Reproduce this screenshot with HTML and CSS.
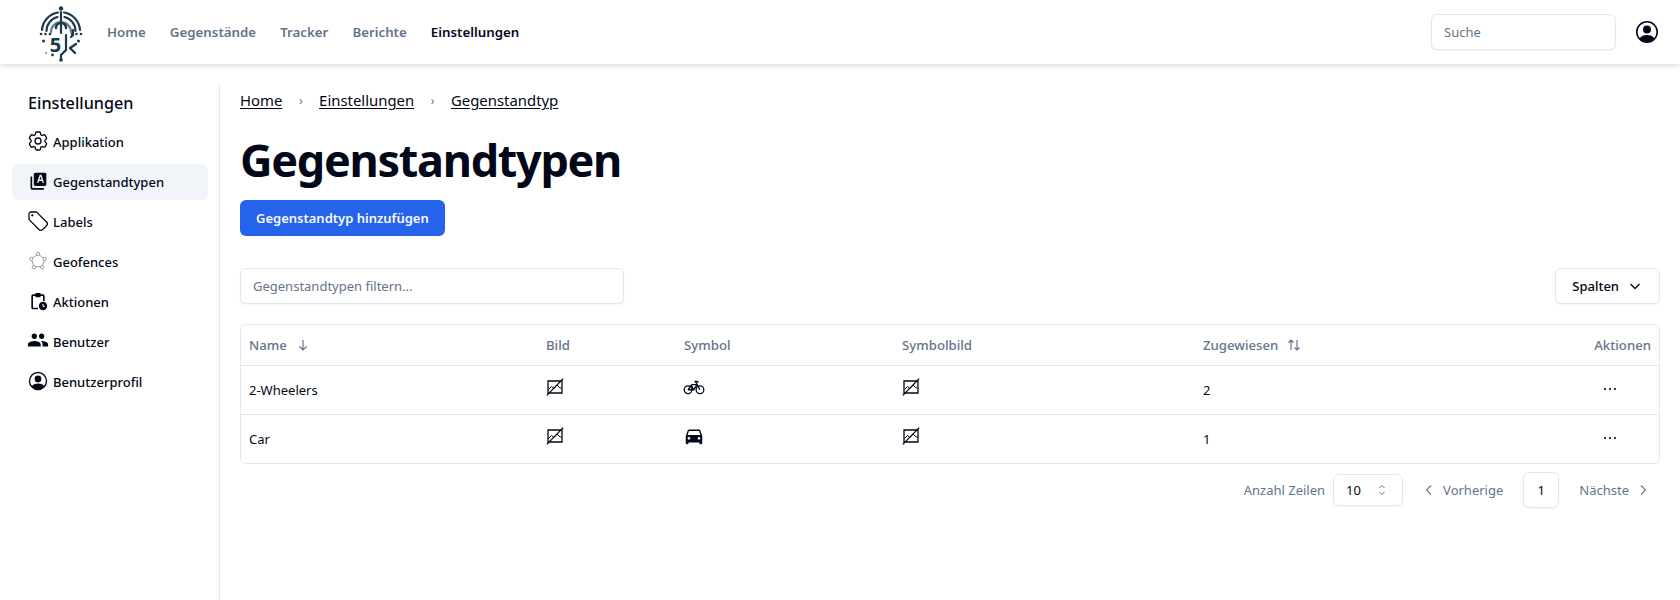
FILE: index.html
```html
<!DOCTYPE html>
<html lang="de">
	<head>
		<meta charset="UTF-8">
		<title>Gegenstandtypen</title>
		<link rel="stylesheet" href="styles.css">
	</head>

	<body>
		<svg class="sprite" width="0" height="0">
			<symbol id="no-image" viewBox="0 0 18 18">
				<path d="M2 3h14v12H2z" fill="none" stroke="currentColor" stroke-width="1.3"/>
				<path d="M2.500 11.500l3-3 2.500 2 3-3.500 2 2 2.500 1.500" fill="none" stroke="currentColor" stroke-width="1"/>
				<path d="M.8 17.400L17.200.6" fill="none" stroke="currentColor" stroke-width="1.3"/>
			</symbol>
			<symbol id="dots" viewBox="0 0 16 16">
				<circle cx="3" cy="8" r="1.100"/><circle cx="8" cy="8" r="1.100"/><circle cx="13" cy="8" r="1.100"/>
			</symbol>
		</svg>

		<header class="topbar">
			<div class="topbar-left">
				<svg class="logo" viewBox="0 0 44 56" fill="none" stroke="#1b3a4b" stroke-linecap="round">
					<circle cx="22" cy="2.500" r="2.200" fill="#1b3a4b" stroke="none"/>
					<path d="M3 24a19 19 0 0 1 16-17.500M25 6.500a19 19 0 0 1 16 17.500" stroke-width="2.200"/>
					<path d="M7.500 25a14.500 14.500 0 0 1 11-14M25.500 11a14.500 14.500 0 0 1 11 14" stroke-width="2.200"/>
					<path d="M12 26a10 10 0 0 1 20 0" stroke="#5b7a88" stroke-width="2.200"/>
					<path d="M22 6v21" stroke-width="2.200"/>
					<path d="M17 22a5 5 0 0 1 10 0" stroke-width="2.400"/>
					<path d="M34 24v5l-2 2M27 29v15l-5 5v5" stroke-width="2.200"/>
					<path d="M31 42l6-4M31 42l5 5" stroke-width="2.400"/>
					<circle cx="22" cy="54" r="1.800" fill="#1b3a4b" stroke="none"/>
					<g fill="#1b3a4b" stroke="none">
						<circle cx="2" cy="28" r="1.300"/><circle cx="6.500" cy="28" r="1.300"/><circle cx="11" cy="28" r="1.300"/>
						<circle cx="33" cy="28" r="1.300"/><circle cx="37.500" cy="28" r="1.300"/><circle cx="42" cy="28" r="1.300"/>
						<circle cx="4.500" cy="35" r="1.500"/><circle cx="39.500" cy="35" r="1.500"/>
						<circle cx="7" cy="47" r=".8"/><circle cx="13.500" cy="49" r="1.400"/>
						<text x="16.500" y="46" class="logo-digit" text-anchor="middle">5</text>
					</g>
				</svg>
				<nav class="mainnav">
					<a href="#">Home</a>
					<a href="#">Gegenstände</a>
					<a href="#">Tracker</a>
					<a href="#">Berichte</a>
					<a href="#" class="current">Einstellungen</a>
				</nav>
			</div>
			<div class="topbar-right">
				<input class="field search" type="text" placeholder="Suche">
				<svg class="user-icon" viewBox="0 0 24 24">
					<circle cx="12" cy="12" r="10.200" fill="none" stroke="currentColor" stroke-width="1.600"/>
					<circle cx="12" cy="9.500" r="4"/>
					<path d="M4.500 18.500c1.500-2.500 4-3.500 7.500-3.500s6 1 7.500 3.500c-2 2.300-4.500 3.500-7.500 3.500s-5.500-1.200-7.500-3.500z"/>
				</svg>
			</div>
		</header>

		<div class="layout">
			<aside class="sidebar">
				<h2>Einstellungen</h2>
				<ul>
					<li>
						<a href="#">
							<svg viewBox="2 2 20 20" fill="none" stroke="currentColor" stroke-width="1.300" stroke-linejoin="round">
								<path d="M9.594 3.940c.09-.542.56-.94 1.110-.94h2.593c.55 0 1.020.398 1.110.94l.213 1.281c.063.374.313.686.645.87.074.04.147.083.22.127.325.196.72.257 1.075.124l1.217-.456a1.125 1.125 0 0 1 1.370.49l1.296 2.247a1.125 1.125 0 0 1-.26 1.431l-1.003.827c-.293.241-.438.613-.43.992a7.723 7.723 0 0 1 0 .255c-.008.378.137.75.43.991l1.004.827c.424.35.534.955.26 1.430l-1.298 2.247a1.125 1.125 0 0 1-1.369.491l-1.217-.456c-.355-.133-.75-.072-1.076.124a6.470 6.470 0 0 1-.22.128c-.331.183-.581.495-.644.869l-.213 1.281c-.09.543-.56.94-1.110.94h-2.594c-.55 0-1.019-.398-1.110-.94l-.213-1.281c-.062-.374-.312-.686-.644-.87a6.520 6.520 0 0 1-.22-.127c-.325-.196-.72-.257-1.076-.124l-1.217.456a1.125 1.125 0 0 1-1.369-.49l-1.297-2.247a1.125 1.125 0 0 1 .26-1.431l1.004-.827c.292-.24.437-.613.43-.991a6.932 6.932 0 0 1 0-.255c.007-.38-.138-.751-.43-.992l-1.004-.827a1.125 1.125 0 0 1-.26-1.430l1.297-2.247a1.125 1.125 0 0 1 1.370-.491l1.216.456c.356.133.751.072 1.076-.124.072-.044.146-.086.22-.128.332-.183.582-.495.644-.869l.214-1.280Z"/>
								<circle cx="12" cy="12" r="3"/>
							</svg>
							Applikation
						</a>
					</li>
					<li class="active">
						<a href="#">
							<svg viewBox="0 0 24 24">
								<path d="M3 6.500h2v14h14v2H5a2 2 0 0 1-2-2z"/>
								<rect x="7" y="2" width="15" height="16" rx="2"/>
								<path d="M14 4.500l-3.300 9.500h1.800l.7-2.100h3.600l.7 2.100h1.800L16 4.500zM13.700 10.300l1.300-3.800 1.300 3.800z" fill="#f1f5f9" fill-rule="evenodd"/>
							</svg>
							Gegenstandtypen
						</a>
					</li>
					<li>
						<a href="#">
							<svg viewBox="2 2 20 20" fill="none" stroke="currentColor" stroke-width="1.300" stroke-linejoin="round">
								<path d="M9.568 3H5.250A2.250 2.250 0 0 0 3 5.250v4.318c0 .597.237 1.170.659 1.591l9.581 9.581c.699.699 1.780.872 2.607.33a18.095 18.095 0 0 0 5.223-5.223c.542-.827.369-1.908-.33-2.607L11.160 3.660A2.250 2.250 0 0 0 9.568 3Z"/>
								<circle cx="6.300" cy="6.300" r=".5" fill="currentColor"/>
							</svg>
							Labels
						</a>
					</li>
					<li>
						<a href="#">
							<svg viewBox="0 0 24 24" fill="none" stroke="#8b8b8b" stroke-width="1">
								<path d="M12 3.500l8 6-3 9.500H7l-3-9.500z"/>
								<g fill="#fff">
									<circle cx="12" cy="3.500" r="2"/><circle cx="20" cy="9.500" r="2"/><circle cx="17" cy="19.500" r="2"/>
									<circle cx="7" cy="19.500" r="2"/><circle cx="4" cy="9.500" r="2"/>
								</g>
							</svg>
							Geofences
						</a>
					</li>
					<li>
						<a href="#">
							<svg viewBox="0 0 24 24">
								<path d="M9 2.500h6v1.500h3a2 2 0 0 1 2 2v6h-2V6h-3v1.500H9V6H6v14h6v2H6a2 2 0 0 1-2-2V6a2 2 0 0 1 2-2h3z"/>
								<circle cx="18" cy="18" r="5"/>
								<path d="M18 15.500v3h2.200" fill="none" stroke="#fff" stroke-width="1.200"/>
							</svg>
							Aktionen
						</a>
					</li>
					<li>
						<a href="#">
							<svg viewBox="0 0 24 24" class="wide">
								<path d="M16 11c1.660 0 2.990-1.340 2.990-3S17.660 5 16 5c-1.660 0-3 1.340-3 3s1.340 3 3 3zm-8 0c1.660 0 2.990-1.340 2.990-3S9.660 5 8 5C6.340 5 5 6.340 5 8s1.340 3 3 3zm0 2c-2.330 0-7 1.170-7 3.500V19h14v-2.500c0-2.330-4.670-3.500-7-3.500zm8 0c-.29 0-.62.02-.97.05 1.160.84 1.970 1.970 1.970 3.450V19h6v-2.500c0-2.330-4.670-3.500-7-3.500z"/>
							</svg>
							Benutzer
						</a>
					</li>
					<li>
						<a href="#">
							<svg viewBox="0 0 24 24">
								<circle cx="12" cy="12" r="10.200" fill="none" stroke="currentColor" stroke-width="1.600"/>
								<circle cx="12" cy="9.500" r="4"/>
								<path d="M4.500 18.500c1.500-2.500 4-3.500 7.500-3.500s6 1 7.500 3.500c-2 2.300-4.500 3.500-7.500 3.500s-5.500-1.200-7.500-3.500z"/>
							</svg>
							Benutzerprofil
						</a>
					</li>
				</ul>
			</aside>

			<main class="content">
				<nav class="breadcrumb">
					<a href="#">Home</a>
					<span class="sep">›</span>
					<a href="#">Einstellungen</a>
					<span class="sep">›</span>
					<a href="#">Gegenstandtyp</a>
				</nav>

				<h1>Gegenstandtypen</h1>

				<button class="btn-primary">Gegenstandtyp hinzufügen</button>

				<div class="toolbar">
					<input class="field filter" type="text" placeholder="Gegenstandtypen filtern...">
					<button class="btn-outline">
						Spalten
						<svg viewBox="0 0 16 16" fill="none" stroke="currentColor" stroke-width="1.300"><path d="M3.500 6l4.500 4.500L12.500 6"/></svg>
					</button>
				</div>

				<div class="table-wrap">
					<table>
						<colgroup>
							<col class="col-name"><col class="col-image"><col class="col-symbol"><col class="col-symbolimage"><col class="col-assigned"><col>
						</colgroup>
						<thead>
							<tr>
								<th>
									<span class="th-inner">Name
										<svg viewBox="0 0 16 16" fill="none" stroke="currentColor" stroke-width="1.200"><path d="M8 3v10M4.500 9.500L8 13l3.500-3.500"/></svg>
									</span>
								</th>
								<th>Bild</th>
								<th>Symbol</th>
								<th>Symbolbild</th>
								<th>
									<span class="th-inner">Zugewiesen
										<svg viewBox="0 0 16 16" fill="none" stroke="currentColor" stroke-width="1.200"><path d="M5 13V3M2.500 5.500L5 3l2.500 2.500M11 3v10M8.500 10.500L11 13l2.500-2.500"/></svg>
									</span>
								</th>
								<th class="right">Aktionen</th>
							</tr>
						</thead>
						<tbody>
							<tr>
								<td>2-Wheelers</td>
								<td><svg class="cell-icon"><use href="#no-image"/></svg></td>
								<td>
									<svg class="cell-icon symbol" viewBox="0 0 24 24" fill="none" stroke="currentColor" stroke-width="1.400">
										<circle cx="5.500" cy="15" r="4.200"/>
										<circle cx="18.500" cy="15" r="4.200"/>
										<path d="M5.500 15l4-5.500h5.500M9 9.500l2.500 5.500h-6M11.500 15l4-5.500 3 5.500M13.500 6l2 3.500M12.500 6h3l1.500 1"/>
									</svg>
								</td>
								<td><svg class="cell-icon"><use href="#no-image"/></svg></td>
								<td>2</td>
								<td class="actions"><svg class="dots"><use href="#dots"/></svg></td>
							</tr>
							<tr>
								<td>Car</td>
								<td><svg class="cell-icon"><use href="#no-image"/></svg></td>
								<td>
									<svg class="cell-icon symbol" viewBox="0 0 24 24">
										<path d="M18.920 6.010C18.720 5.420 18.160 5 17.500 5h-11c-.66 0-1.210.42-1.420 1.010L3 12v8c0 .55.45 1 1 1h1c.55 0 1-.45 1-1v-1h12v1c0 .55.45 1 1 1h1c.55 0 1-.45 1-1v-8l-2.080-5.990zM6.500 16c-.83 0-1.500-.67-1.500-1.500S5.670 13 6.500 13s1.500.67 1.500 1.500S7.330 16 6.500 16zm11 0c-.83 0-1.500-.67-1.500-1.500s.67-1.500 1.500-1.500 1.500.67 1.500 1.500-.67 1.500-1.500 1.500zM5 11l1.500-4.500h11L19 11H5z"/>
									</svg>
								</td>
								<td><svg class="cell-icon"><use href="#no-image"/></svg></td>
								<td>1</td>
								<td class="actions"><svg class="dots"><use href="#dots"/></svg></td>
							</tr>
						</tbody>
					</table>
				</div>

				<div class="pager">
					<span class="pager-label">Anzahl Zeilen</span>
					<button class="rows-select">
						10
						<svg viewBox="0 0 16 16" fill="none" stroke="#64748b" stroke-width="1"><path d="M5.500 6L8 3.500 10.500 6M5.500 10L8 12.500 10.500 10"/></svg>
					</button>
					<a class="pager-link prev" href="#">
						<svg viewBox="0 0 16 16" fill="none" stroke="currentColor" stroke-width="1.100"><path d="M10 3.500L5.500 8l4.500 4.500"/></svg>
						Vorherige
					</a>
					<button class="page-current">1</button>
					<a class="pager-link next" href="#">
						Nächste
						<svg viewBox="0 0 16 16" fill="none" stroke="currentColor" stroke-width="1.100"><path d="M6 3.500L10.500 8 6 12.500"/></svg>
					</a>
				</div>
			</main>
		</div>
	</body>
</html>
```

FILE: styles.css
```css
* {
	box-sizing: border-box;
}

body {
	margin: 0;
	height: 600px;
	overflow: hidden;
	background: #ffffff;
	color: #020817;
	font: 13px "Noto Sans", sans-serif;
	display: flex; flex-direction: column;
}

a {
	color: inherit;
	text-decoration: none;
}

svg {
	flex: none;
}

svg:not([fill]) {
	fill: currentColor;
}

.sprite {
	position: absolute;
}

.field {
	height: 36px;
	padding: 0 12px;
	border: 1px solid #e2e8f0;
	border-radius: 6px;
	background: #ffffff;
	font: 13px "Noto Sans", sans-serif;
	box-shadow: 0 1px 2px rgba(0, 0, 0, 0.05);
}

.field::placeholder {
	color: #64748b;
	opacity: 1;
}

/* top bar */

.topbar {
	flex: none;
	height: 64px;
	padding: 0 16px 0 39px;
	background: #ffffff;
	box-shadow: 0 2px 6px rgba(0, 0, 0, 0.14);
	display: flex; align-items: center; justify-content: space-between;
}

.topbar-left {
	display: flex; align-items: center;
	gap: 24px;
}

.logo {
	width: 44px;
	height: 56px;
	margin-top: 4px;
}

.logo-digit {
	font: 700 20px "Noto Sans", sans-serif;
}

.mainnav {
	display: flex;
	gap: 24px;
	font-size: 13.300px;
	font-weight: 600;
	color: #64748b;
}

.mainnav .current {
	color: #020817;
}

.topbar-right {
	display: flex; align-items: center;
	gap: 19px;
	padding-right: 5px;
}

.search {
	width: 185px;
}

.user-icon {
	width: 24px;
	height: 24px;
}

/* sidebar */

.layout {
	flex: 1;
	min-height: 0;
	padding-top: 20px;
	display: flex;
}

.sidebar {
	flex: none;
	width: 220px;
	padding: 0 12px;
	border-right: 1px solid #e2e8f0;
}

.sidebar h2 {
	margin: 5px 0 7px 16px;
	font-size: 16.200px;
	font-weight: 500;
	line-height: 28px;
}

.sidebar ul {
	margin: 0; padding: 0;
	list-style: none;
	width: 196px;
	display: flex; flex-direction: column;
	gap: 4px;
}

.sidebar li a {
	height: 36px;
	padding: 0 16px;
	border-radius: 6px;
	font-size: 13px;
	font-weight: 500;
	display: flex; align-items: center;
	gap: 5px;
}

.sidebar li.active a {
	background: #f1f5f9;
}

.sidebar li svg {
	width: 20px;
	height: 20px;
	margin-top: -3px;
}

.sidebar li svg.wide {
	width: 22px;
	height: 22px;
	margin: -4px -1px 0 -1px;
}

/* content */

.content {
	flex: 1;
	min-width: 0;
	padding: 0 20px;
}

.breadcrumb {
	margin-top: 2px;
	height: 28px;
	font-size: 14.900px;
	display: flex; align-items: center;
	gap: 16.500px;
}

.breadcrumb a {
	text-decoration: underline;
	text-underline-offset: 2px;
}

.breadcrumb .sep {
	color: #64748b;
	font-size: 12px;
}

h1 {
	margin: 20px 0 14px 0;
	font-size: 45px;
	font-weight: 700;
	line-height: 52px;
	letter-spacing: -1.300px;
}

.btn-primary {
	height: 36px;
	padding: 0 16px;
	border: 0;
	border-radius: 6px;
	background: #2563eb;
	color: #f8fafc;
	font: 600 13px "Noto Sans", sans-serif;
	display: block;
}

.toolbar {
	margin-top: 32px;
	display: flex; align-items: center; justify-content: space-between;
}

.filter {
	width: 384px;
}

.btn-outline {
	height: 36px;
	padding: 0 16px;
	border: 1px solid #e2e8f0;
	border-radius: 6px;
	background: #ffffff;
	color: #020817;
	font: 500 13px "Noto Sans", sans-serif;
	box-shadow: 0 1px 2px rgba(0, 0, 0, 0.05);
	display: flex; align-items: center;
	gap: 8px;
}

.btn-outline svg {
	width: 16px;
	height: 16px;
}

.table-wrap {
	margin-top: 20px;
	border: 1px solid #e2e8f0;
	border-radius: 6px;
}

table {
	width: 100%;
	border-collapse: collapse;
	table-layout: fixed;
	font-size: 13px;
}

.col-name { width: 297px; }
.col-image { width: 138px; }
.col-symbol { width: 218px; }
.col-symbolimage { width: 301px; }
.col-assigned { width: 300px; }

th {
	height: 40px;
	padding: 0 8px;
	color: #64748b;
	font-size: 13.200px;
	font-weight: 500;
	text-align: left;
	border-bottom: 1px solid #e2e8f0;
}

th.right {
	text-align: right;
}

.th-inner {
	display: flex; align-items: center;
	gap: 8px;
}

.th-inner svg {
	width: 16px;
	height: 16px;
}

td {
	height: 49px;
	padding: 0 8px;
}

tbody tr + tr td {
	border-top: 1px solid #e2e8f0;
}

.cell-icon {
	width: 18px;
	height: 18px;
	display: block;
	margin-top: -6px;
}

.cell-icon.symbol {
	width: 22px;
	height: 22px;
	margin-left: -1px;
}

.actions {
	text-align: right;
	padding-right: 41px;
}

.dots {
	width: 16px;
	height: 16px;
	display: inline-block;
	vertical-align: middle;
	margin-top: -4px;
}

/* paging */

.pager {
	margin-top: 8px;
	padding-right: 9px;
	color: #64748b;
	font-size: 13px;
	display: flex; align-items: center; justify-content: flex-end;
}

.pager-label {
	margin-right: 8px;
}

.rows-select {
	width: 70px;
	height: 32px;
	padding: 0 12px;
	border: 1px solid #e2e8f0;
	border-radius: 6px;
	background: #ffffff;
	color: #020817;
	font: 13px "Noto Sans", sans-serif;
	box-shadow: 0 1px 2px rgba(0, 0, 0, 0.05);
	display: flex; align-items: center; justify-content: space-between;
}

.rows-select svg {
	width: 16px;
	height: 16px;
}

.pager-link {
	display: flex; align-items: center;
	gap: 6px;
}

.pager-link svg {
	width: 16px;
	height: 16px;
}

.prev {
	margin: 0 20px 0 18px;
}

.next {
	margin-left: 20px;
}

.page-current {
	width: 36px;
	height: 36px;
	border: 1px solid #e2e8f0;
	border-radius: 6px;
	background: #ffffff;
	color: #020817;
	font: 13px "Noto Sans", sans-serif;
	box-shadow: 0 1px 2px rgba(0, 0, 0, 0.05);
}
```
